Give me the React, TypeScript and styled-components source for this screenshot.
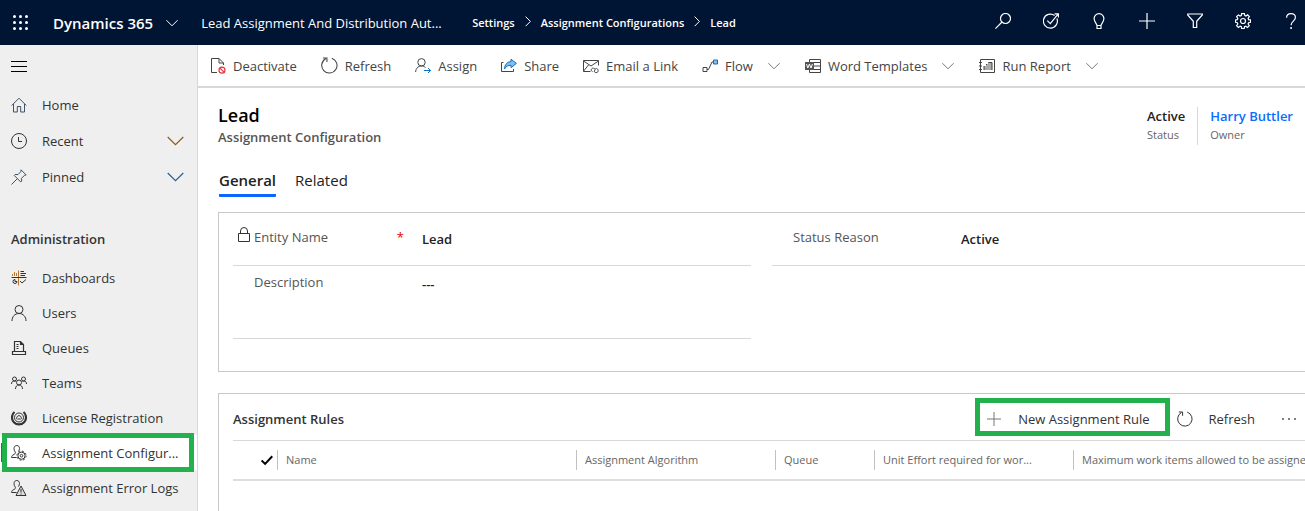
import React from "react";
import styled, { createGlobalStyle, css } from "styled-components";

const GlobalStyle = createGlobalStyle`
  *, *::before, *::after { box-sizing: border-box; }
  body {
    margin: 0;
    background: #fff;
    color: #333;
    font-family: "Open Sans", "Noto Sans", sans-serif;
    font-size: 13px;
    line-height: 20px;
  }
  button { font: inherit; color: inherit; background: none; border: 0; padding: 0; cursor: pointer; }
  a { color: inherit; text-decoration: none; }
  h1, h2, p { margin: 0; font-size: inherit; font-weight: inherit; }
  svg { display: block; flex: none; }
`;

/* ---------- page ---------- */
const Page = styled.div`
  display: flex;
  flex-direction: column;
  min-height: 100vh;
  overflow: hidden;
`;
const Body = styled.div`
  flex: 1;
  display: grid;
  grid-template-columns: 198px minmax(0, 1fr);
`;

/* ---------- top bar ---------- */
const TopBar = styled.header`
  display: flex;
  align-items: center;
  height: 45px;
  padding-left: 12px;
  background: #001433;
  color: #fff;
  white-space: nowrap;
`;
const Brand = styled.button`
  display: flex;
  align-items: center;
  gap: 13px;
  margin: 0 23px 0 24px;
  font-size: 15px;
  font-weight: 600;
`;
const AppName = styled.a`
  width: 246px;
  margin-right: 25px;
  overflow: hidden;
  text-overflow: ellipsis;
`;
const Crumbs = styled.nav`
  display: flex;
  align-items: center;
  gap: 10px;
  font-size: 11px;
  font-weight: 600;
`;
const TopIcons = styled.div`
  display: flex;
  gap: 20px;
  margin-left: auto;
  padding-bottom: 4px;
`;
const TopIcon = styled.button`
  display: grid;
  place-items: center;
  width: 28px;
  height: 28px;
`;

/* ---------- side bar ---------- */
const Side = styled.nav`
  background: #efefef;
  border-right: 1px solid #d8d8d8;
`;
const MenuButton = styled.button`
  display: flex;
  align-items: center;
  height: 42px;
  padding-left: 11px;
`;
const SideList = styled.ul`
  list-style: none;
  margin: 0;
  padding: 0;
`;
const SideItem = styled.li<{ $tall?: boolean; $active?: boolean }>`
  position: relative;
  height: ${(p) => (p.$tall ? 36 : 35)}px;
  ${(p) =>
    p.$active &&
    css`
      background: #fff;
      &::before {
        content: "";
        position: absolute;
        inset: 8px auto 8px 1px;
        width: 3px;
        background: #0b66e4;
      }
    `}
`;
const SideLink = styled.a`
  display: flex;
  align-items: center;
  gap: 15px;
  height: 100%;
  padding: 0 13px 0 11px;
`;
const SideLabel = styled.span`
  flex: 1;
  min-width: 0;
  overflow: hidden;
  white-space: nowrap;
  text-overflow: ellipsis;
`;
const SideHeading = styled.h2`
  height: 65px;
  padding: 34px 0 0 11px;
  font-weight: 600;
`;
const Highlight = styled.span`
  position: absolute;
  inset: -2px 3px -2px 2px;
  border: 5px solid #22b14c;
  pointer-events: none;
`;

/* ---------- command bar ---------- */
const Main = styled.main`
  display: flex;
  flex-direction: column;
  overflow: hidden;
`;
const CommandBar = styled.div`
  display: flex;
  align-items: center;
  gap: 24px;
  height: 43px;
  padding-left: 12px;
  border-bottom: 2px solid #d8d8d8;
  white-space: nowrap;
`;
const Command = styled.button`
  display: flex;
  align-items: center;
  gap: 7px;
  color: #444;
`;
const CommandCaret = styled.span`
  margin: 0 1px 0 8px;
`;

/* ---------- record header ---------- */
const Record = styled.div`
  flex: 1;
  display: flex;
  flex-direction: column;
  padding-left: 20px;
`;
const RecordHead = styled.div`
  display: flex;
  justify-content: space-between;
  padding: 15px 12px 0 0;
`;
const Title = styled.h1`
  font-size: 18px;
  line-height: 24px;
  font-weight: 600;
  color: #000;
`;
const Subtitle = styled.p`
  font-weight: 600;
  color: #555;
`;
const Facts = styled.div`
  display: flex;
  align-items: flex-start;
  padding-top: 4px;
`;
const Fact = styled.div<{ $divided?: boolean }>`
  font-size: 11px;
  height: 38px;
  color: #666;
  ${(p) => p.$divided && css`
    margin-left: 12px;
    padding-left: 12px;
    border-left: 1px solid #d8d8d8;
  `}
`;
const FactValue = styled.div`
  font-size: 13px;
  line-height: 18px;
  font-weight: 600;
  color: #222;
  a { color: #0b6cff; }
`;
const Tabs = styled.div`
  display: flex;
  gap: 19px;
  margin: 23px 0 15px 1px;
`;
const Tab = styled.button<{ $selected?: boolean }>`
  height: 27px;
  padding-bottom: 4px;
  border-bottom: 3px solid ${(p) => (p.$selected ? "#0b66ff" : "transparent")};
  border-radius: 1px;
  font-size: 15px;
  font-weight: ${(p) => (p.$selected ? 600 : 400)};
  color: #222;
`;

/* ---------- cards ---------- */
const Card = styled.section<{ $grow?: boolean }>`
  border: 1px solid #c8c8c8;
  border-right: 0;
  padding-left: 14px;
  ${(p) => p.$grow && css`
    flex: 1;
    min-height: 118px;
    margin-top: 21px;
    border-bottom: 0;
  `}
`;
const Fields = styled.div`
  display: grid;
  grid-template-columns: minmax(0, 518fr) minmax(0, 533fr);
  column-gap: 21px;
  padding-bottom: 32px;
`;
const Field = styled.div<{ $tall?: boolean }>`
  display: grid;
  grid-template-columns: 21px 150px 1fr;
  align-items: start;
  height: ${(p) => (p.$tall ? 73 : 53)}px;
  padding-top: ${(p) => (p.$tall ? 6 : 14)}px;
  border-bottom: 1px solid #d8d8d8;
`;
const FieldIcon = styled.span`
  display: flex;
  justify-content: center;
`;
const FieldLabel = styled.label`
  display: flex;
  justify-content: space-between;
  color: #555;
`;
const Required = styled.span`
  color: #e60000;
`;
const FieldValue = styled.output`
  padding: 2px 0 0 18px;
  font-weight: 600;
  color: #222;
`;

/* ---------- rules grid ---------- */
const GridBar = styled.div`
  display: flex;
  align-items: center;
  height: 46px;
  padding: 3px 8px 0 0;
`;
const GridTitle = styled.h2`
  flex: 1;
  font-weight: 600;
`;
const GridAction = styled.button`
  display: flex;
  align-items: center;
  gap: 16px;
  white-space: nowrap;
`;
const NewRule = styled(GridAction)`
  height: 38px;
  margin: 0 7px 3px 0;
  padding: 3px 15px 0 6px;
  border: 5px solid #22b14c;
`;
const More = styled.button`
  margin-left: 26px;
`;
const Grid = styled.table`
  width: 100%;
  table-layout: fixed;
  border-collapse: collapse;
  border-top: 1px solid #d8d8d8;
  border-bottom: 2px solid #dedede;
`;
const HeadCell = styled.th<{ $w?: number }>`
  ${(p) => p.$w && css`width: ${p.$w}px;`}
  height: 39px;
  padding: 1px 0 0;
  text-align: left;
  font-size: 11px;
  font-weight: 400;
  color: #666;
`;
const HeadText = styled.div`
  padding-left: 8px;
  border-left: 1px solid #c0c0c0;
  white-space: nowrap;
`;
const SelectAll = styled.button`
  display: block;
  margin-left: 28px;
`;

/* ---------- drawings ---------- */
type IconProps = { size?: number; w?: number; color?: string; children: React.ReactNode };
const Icon = ({ size = 16, w = 1, color = "currentColor", children }: IconProps) => (
  <svg width={size} height={size} viewBox="0 0 16 16" fill="none" stroke={color} strokeWidth={w} aria-hidden="true">
    {children}
  </svg>
);
const Caret = ({ size = 12, color = "currentColor" }: { size?: number; color?: string }) => (
  <svg width={size} height={size} viewBox="0 0 12 12" fill="none" stroke={color} aria-hidden="true">
    <path d="M.4 3.2 6 8.8l5.600-5.600" />
  </svg>
);
const SideCaret = ({ color }: { color: string }) => (
  <svg width="17" height="10" viewBox="0 0 17 10" fill="none" stroke={color} strokeWidth="1.200" aria-hidden="true">
    <path d="M.7 1 8.500 8.700 16.300 1" />
  </svg>
);
const CrumbArrow = () => (
  <svg width="6" height="14" viewBox="0 0 6 14" fill="none" stroke="#fff" aria-hidden="true">
    <path d="M.6.600 5.400 5.400.6 10.200" />
  </svg>
);
const Waffle = () => (
  <svg width="17" height="17" viewBox="0 0 17 17" fill="#fff" aria-hidden="true">
    {[2.5, 8.5, 14.5].map((y) => [2.5, 8.5, 14.5].map((x) => <circle key={`${x}-${y}`} cx={x} cy={y} r="1.500" />))}
  </svg>
);
const RefreshIcon = ({ size = 17 }: { size?: number }) => (
  <Icon size={size}>
    <path d="M10.200 1.100A7.200 7.200 0 1 1 4.400 1.600M1.800 1H5.600V4.800" />
  </Icon>
);
const Person = <path d="M8 8.500a4 4 0 1 0 0-8 4 4 0 0 0 0 8ZM1 16c0-4.300 2.700-7.500 7-7.500s7 3.200 7 7.500" />;
const SmallPerson = (
  <path d="M7.500 6.500c.6-1.200 1-2 1-3C8.500 1.700 7.400.5 5.800.5S3 1.700 3 3.500c0 1.500.5 2.500 1.200 3.500.5.800.2 1.700-.7 2.200L2 10C1 10.600.6 11.300.6 12.500h5" />
);

const topIcons: [string, React.ReactNode][] = [
  ["Search", <><circle cx="10.500" cy="5.500" r="5" /><path d="M7 9 .4 15.600" /></>],
  ["Task flow", <><path d="M11.600 2.500A7 7 0 1 0 13.900 5.500" /><path d="m4.300 7.700 3 3L15 1.200M11.500.800h3.900v3.800" /></>],
  ["Assistant", <path d="M6 15.500h4v-3c0-1.500 2.900-3.700 2.900-6.900a4.900 4.900 0 0 0-9.800 0C3.100 8.800 6 11 6 12.500ZM6 12.500h4" />],
  ["New", <path d="M8 0v16M0 8h16" />],
  ["Filter", <path d="M.7 1h14.600v1L9.700 8.300v6.200H6.300V8.300L.7 2Z" />],
  ["Settings", <><circle cx="8" cy="8" r="2.500" /><path d="M6.600.6h2.800l.4 2 1.100.5 1.700-1.200 1.700 1.700-1.200 1.800.5 1.200 1.900.3v2.400l-1.900.4-.5 1.300 1.200 1.700-1.800 1.800-1.700-1.200-1.300.5-.3 1.800H6.700l-.3-1.800-1.300-.5-1.700 1.200-1.800-1.800 1.200-1.700-.5-1.300-1.800-.4V6.900l1.800-.3.5-1.200-1.200-1.800 1.800-1.700 1.700 1.200 1.200-.5Z" /></>],
  ["Help", <><path d="M3.600 4.700C3.600 2 5.500.600 8 .600s4.400 1.500 4.400 3.900c0 3.500-4.300 3.800-4.300 7.700" /><path d="M8.100 14v2" strokeWidth="1.500" /></>],
];

const commands: { label: string; icon: React.ReactNode; menu?: boolean }[] = [
  { label: "Deactivate", icon: <Icon><path d="M7 14.500H1.500V.500H9L13.500 5v2M9 .500V5h4.500" /><g stroke="#e8323c" strokeWidth="1.200"><circle cx="12" cy="12.200" r="3" /><path d="m10 10.200 4 4" /></g></Icon> },
  { label: "Refresh", icon: <RefreshIcon /> },
  { label: "Assign", icon: <Icon><path d="M6.500 8a3.700 3.700 0 1 0 0-7.400 3.700 3.700 0 0 0 0 7.400ZM.6 14C.8 10.500 3 8 6.500 8c1.700 0 3 .5 4 1.500" /><path d="M9 12.500h6.500M13 10l2.500 2.500L13 15" stroke="#106ebe" /></Icon> },
  { label: "Share", icon: <Icon><path d="M2.500 4.500h-2v9h12V11" /><path d="M10 1.200 15.400 5.400 10 9.600V7.300C7 7.200 5 8.300 3.500 11 3.700 6.700 6 3.800 10 3.600Z" fill="#83beec" stroke="#106ebe" /></Icon> },
  { label: "Email a Link", icon: <Icon><path d="M7.500 13.500h-7v-11h15v5M.5 3 8 8l7.500-5M.5 13.200 5.500 7" /><path d="M9.500 13.500c-2-.5-1.500-3.500 1-3.300 2 .2 2.200 2.600.5 3M12.500 10.500c2.500-.5 3.800 3 1.500 4-2 .7-3.200-1-2.500-2" /></Icon> },
  { label: "Flow", menu: true, icon: <Icon><path d="M1 9.500h4v4H1ZM5 11.500h1.500L10 4h1.500" /><path d="M11.500 2h4v4h-4Z" fill="#83beec" stroke="#106ebe" /></Icon> },
  { label: "Word Templates", menu: true, icon: <Icon><path d="M4.500 4V1.500h11v13h-11V12M9 4.500h6.500M9 8h6.500M9 11.500h6.500" /><path d="M0 4h9v8H0Z" fill="#555" stroke="none" /><path d="m1.500 6 1.300 4 1.600-4L6 10l1.400-4" stroke="#fff" /></Icon> },
  { label: "Run Report", menu: true, icon: <Icon><path d="M1.500 1.500h14v13h-14ZM0 4.500h3M0 8h3M0 11.500h3" /><path d="M5 12V8h2V6h2V4h4v8Z" fill="#aaa" stroke="none" /><path d="M5 12V8M7.500 6v1M9.500 4.500H13V12" /></Icon> },
];

const quickLinks: { label: string; icon: React.ReactNode; caret?: string }[] = [
  { label: "Home", icon: <Icon color="#3f5368"><path d="M.7 8.500 8 1.200l7.300 7.300M2.500 7v8h3.800V9.500h3.400V15h3.800V7" /></Icon> },
  { label: "Recent", caret: "#8f5a1c", icon: <Icon><circle cx="8" cy="8" r="7.500" /><path d="M7.500 4v4.500H11" /></Icon> },
  { label: "Pinned", caret: "#2d6090", icon: <Icon color="#3f5368"><path d="m10 .8 5.200 5.200-1.700.3-3 3 .2 2.900-.9.800-6.600-6.600.8-.9 3 .1 2.900-3ZM6.200 9.800.5 15.500" /></Icon> },
];

const adminLinks: { label: string; icon: React.ReactNode; active?: boolean }[] = [
  { label: "Dashboards", icon: <Icon><path d="M1.500 6V4M3.500 6V2M5.500 6V3" stroke="#b8752c" /><path d="M7.500.500v15" stroke="#b8752c" /><path d="M9.500 1.500H13M9.500 3.500H15M9.500 5.500H14M.5 7.500h15M6 11.500H4V9.500a2 2 0 1 0 2 2M9 11l2 2 4-3.500" /></Icon> },
  { label: "Users", icon: <Icon>{Person}</Icon> },
  { label: "Queues", icon: <Icon w={1.2}><path d="M3.500 11.500V1.500h6L12.500 4.500v7M9.500 1.500v3h3M5.500 4.500h2M5.500 6.500h2M5.500 8.500h2M1.500 11.500h13v3h-13Z" /></Icon> },
  { label: "Teams", icon: <Icon><circle cx="3.500" cy="4" r="2" /><circle cx="12.500" cy="4" r="2" /><circle cx="8" cy="7.500" r="2.500" /><path d="M.5 9c0-2 1-3 3-3 .7 0 1.300.200 1.700.500M15.500 9c0-2-1-3-3-3-.7 0-1.300.200-1.700.500M4.500 14c0-2.500 1.300-4 3.500-4s3.500 1.500 3.500 4" /></Icon> },
  { label: "License Registration", icon: <Icon><path d="M3.500 2A7 7 0 1 0 12.500 2" strokeWidth="2.200" /><circle cx="8" cy="7.500" r="4.500" /><path d="M6.300 9.500a2.300 2.300 0 1 1 3.400 0M8 8v2" /></Icon> },
  { label: "Assignment Configur...", active: true, icon: <Icon>{SmallPerson}<circle cx="10.500" cy="10.700" r="1.300" /><circle cx="10.500" cy="10.700" r="3.600" /><circle cx="10.500" cy="10.700" r="4.600" strokeDasharray="1.800 1.800" /></Icon> },
  { label: "Assignment Error Logs", icon: <Icon>{SmallPerson}<path d="M10 6 15 15.500H5Z" fill="#ddd" /><path d="M10 9v3.500M10 13.500v1" /></Icon> },
];

const columns: [string, number?][] = [
  ["Name", 299],
  ["Assignment Algorithm", 199],
  ["Queue", 99],
  ["Unit Effort required for wor...", 199],
  ["Maximum work items allowed to be assigned"],
];

export default function App() {
  return (
    <Page>
      <GlobalStyle />
      <TopBar>
        <button aria-label="App launcher"><Waffle /></button>
        <Brand>Dynamics 365<Caret /></Brand>
        <AppName href="#">Lead Assignment And Distribution Aut...</AppName>
        <Crumbs aria-label="Breadcrumb">
          <a href="#">Settings</a>
          <CrumbArrow />
          <a href="#">Assignment Configurations</a>
          <CrumbArrow />
          <a href="#">Lead</a>
        </Crumbs>
        <TopIcons>
          {topIcons.map(([label, drawing]) => (
            <TopIcon key={label} aria-label={label}><Icon w={1.2}>{drawing}</Icon></TopIcon>
          ))}
        </TopIcons>
      </TopBar>
      <Body>
        <Side aria-label="Site map">
          <MenuButton aria-label="Toggle menu">
            <Icon color="#000"><path d="M0 3.500h16M0 8.500h16M0 13.500h16" /></Icon>
          </MenuButton>
          <SideList>
            {quickLinks.map((l) => (
              <SideItem key={l.label} $tall>
                <SideLink href="#">{l.icon}<SideLabel>{l.label}</SideLabel>{l.caret && <SideCaret color={l.caret} />}</SideLink>
              </SideItem>
            ))}
          </SideList>
          <SideHeading>Administration</SideHeading>
          <SideList>
            {adminLinks.map((l) => (
              <SideItem key={l.label} $active={l.active}>
                <SideLink href="#">{l.icon}<SideLabel>{l.label}</SideLabel></SideLink>
                {l.active && <Highlight />}
              </SideItem>
            ))}
          </SideList>
        </Side>
        <Main>
          <CommandBar>
            {commands.map((c) => (
              <Command key={c.label}>
                {c.icon}
                {c.label}
                {c.menu && <CommandCaret><Caret color="#777" /></CommandCaret>}
              </Command>
            ))}
          </CommandBar>
          <Record>
            <RecordHead>
              <div>
                <Title>Lead</Title>
                <Subtitle>Assignment Configuration</Subtitle>
              </div>
              <Facts>
                <Fact><FactValue>Active</FactValue>Status</Fact>
                <Fact $divided><FactValue><a href="#">Harry Buttler</a></FactValue>Owner</Fact>
              </Facts>
            </RecordHead>
            <Tabs role="tablist">
              <Tab role="tab" aria-selected $selected>General</Tab>
              <Tab role="tab" aria-selected={false}>Related</Tab>
            </Tabs>
            <Card>
              <Fields>
                <Field>
                  <FieldIcon><Icon><path d="M2.500 6.500h11v8h-11ZM4.500 6.500V4a3.500 3.500 0 0 1 7 0v2.500" /></Icon></FieldIcon>
                  <FieldLabel htmlFor="entity">Entity Name<Required>*</Required></FieldLabel>
                  <FieldValue id="entity">Lead</FieldValue>
                </Field>
                <Field>
                  <FieldIcon />
                  <FieldLabel htmlFor="reason">Status Reason</FieldLabel>
                  <FieldValue id="reason">Active</FieldValue>
                </Field>
                <Field $tall>
                  <FieldIcon />
                  <FieldLabel htmlFor="description">Description</FieldLabel>
                  <FieldValue id="description">---</FieldValue>
                </Field>
              </Fields>
            </Card>
            <Card $grow>
              <GridBar>
                <GridTitle>Assignment Rules</GridTitle>
                <NewRule><Icon color="#777"><path d="M8 1v14M1 8h14" /></Icon>New Assignment Rule</NewRule>
                <GridAction><RefreshIcon size={16} />Refresh</GridAction>
                <More aria-label="More commands">
                  <Icon><g fill="#555" stroke="none"><circle cx="2" cy="8" r="1" /><circle cx="8" cy="8" r="1" /><circle cx="14" cy="8" r="1" /></g></Icon>
                </More>
              </GridBar>
              <Grid>
                <thead>
                  <tr>
                    <HeadCell $w={44}>
                      <SelectAll aria-label="Select all">
                        <Icon size={12} w={2.6} color="#000"><path d="m.8 8.500 4.700 4.700L15 3" /></Icon>
                      </SelectAll>
                    </HeadCell>
                    {columns.map(([name, width]) => (
                      <HeadCell key={name} $w={width} scope="col"><HeadText>{name}</HeadText></HeadCell>
                    ))}
                  </tr>
                </thead>
              </Grid>
            </Card>
          </Record>
        </Main>
      </Body>
    </Page>
  );
}
